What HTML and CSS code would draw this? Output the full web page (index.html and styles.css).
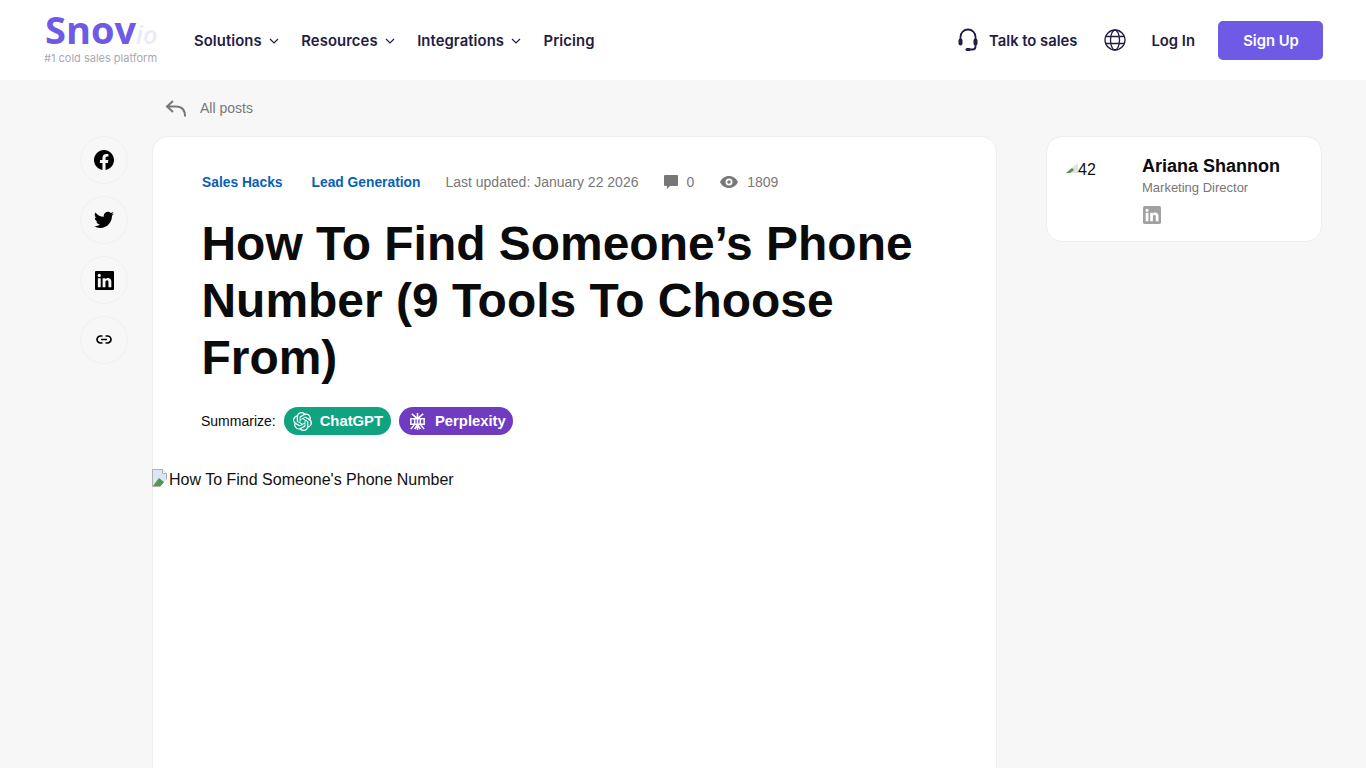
FILE: index.html
```html
<!DOCTYPE html>
<html lang="en">
<head>
    <meta charset="UTF-8">
    <meta name="viewport" content="width=device-width, initial-scale=1.0">
    <title>How To Find Someone's Phone Number (9 Tools To Choose From)</title>
    <link rel="stylesheet" href="styles.css">
</head>
<body>

    <header>
        <a class="logo" href="#">
            <span class="logo-name">Snov<i>io</i></span>
            <span class="logo-tag">#1 cold sales platform</span>
        </a>
        <nav class="main-nav">
            <a href="#">Solutions <svg class="chevron" viewBox="0 0 10 6"><path d="M1 1l4 4 4-4"/></svg></a>
            <a href="#">Resources <svg class="chevron" viewBox="0 0 10 6"><path d="M1 1l4 4 4-4"/></svg></a>
            <a href="#">Integrations <svg class="chevron" viewBox="0 0 10 6"><path d="M1 1l4 4 4-4"/></svg></a>
            <a href="#">Pricing</a>
        </nav>
        <div class="header-right">
            <a class="sales" href="#">
                <svg class="headset" viewBox="0 0 20 24">
                    <path class="line" d="M2.500 13V9a7.500 7.500 0 0 1 15 0v4"/>
                    <rect x="0.500" y="10.500" width="4" height="7" rx="2"/>
                    <rect x="15.500" y="10.500" width="4" height="7" rx="2"/>
                    <path class="line" d="M17.500 17v1.500a3 3 0 0 1-3 3H10"/>
                    <rect x="7.500" y="20" width="5" height="3" rx="1.500"/>
                </svg>
                Talk to sales
            </a>
            <svg class="globe" viewBox="0 0 22 22">
                <circle cx="11" cy="11" r="10"/>
                <ellipse cx="11" cy="11" rx="4.500" ry="10"/>
                <path d="M1.500 7.500h19M1.500 14.500h19"/>
            </svg>
            <a class="login" href="#">Log In</a>
            <a class="signup" href="#">Sign Up</a>
        </div>
    </header>

    <div class="back-row">
        <a href="#">
            <svg class="back-icon" viewBox="0 0 22 20"><path d="M8 2L2 7.500l6 5.500M2 7.500h9c5.500 0 9 3 9 10"/></svg>
            All posts
        </a>
    </div>

    <div class="page">
        <div class="share">
            <a href="#">
                <svg viewBox="0 0 20 20"><path fill-rule="evenodd" d="M20 10.060C20 4.500 15.500 0 10 0S0 4.500 0 10.060c0 5 3.660 9.160 8.440 9.940v-7H5.900v-2.940h2.540V7.850c0-2.520 1.490-3.910 3.780-3.910 1.100 0 2.240.2 2.240.2v2.470h-1.260c-1.240 0-1.630.78-1.630 1.570v1.880h2.780L13.900 13h-2.340v7C16.340 19.220 20 15.060 20 10.060z"/></svg>
            </a>
            <a href="#">
                <svg viewBox="0 0 24 20"><path d="M24 2.400a10 10 0 0 1-2.830.78A4.900 4.900 0 0 0 23.340.48a9.900 9.900 0 0 1-3.130 1.190A4.930 4.930 0 0 0 11.810 6.150 14 14 0 0 1 1.670.91a4.930 4.930 0 0 0 1.520 6.570A4.900 4.900 0 0 1 .96 6.860v.06a4.930 4.930 0 0 0 3.950 4.830 5 5 0 0 1-2.220.08 4.930 4.930 0 0 0 4.600 3.420A9.900 9.900 0 0 1 0 17.290 14 14 0 0 0 7.550 19.500c9.060 0 14-7.500 14-14l-.01-.64A10 10 0 0 0 24 2.400z"/></svg>
            </a>
            <a href="#">
                <svg class="in-icon" viewBox="0 0 20 20"><path fill-rule="evenodd" d="M1 0h18a1 1 0 0 1 1 1v18a1 1 0 0 1-1 1H1a1 1 0 0 1-1-1V1a1 1 0 0 1 1-1zM3 7.500V17h3V7.500zM4.500 3a1.700 1.700 0 1 0 0 3.400 1.700 1.700 0 0 0 0-3.400zM8 7.500V17h3v-5c0-1.400.7-2.200 1.800-2.200S14.200 10.600 14.200 12v5h3v-5.800c0-2.600-1.400-3.900-3.400-3.900-1.300 0-2.300.6-2.800 1.500V7.500z"/></svg>
            </a>
            <a href="#">
                <svg class="link-icon" viewBox="0 0 16 10"><path d="M6.500 1H4.500a3.500 3.500 0 0 0 0 7h2M9.500 1h2a3.500 3.500 0 0 1 0 7h-2M5 4.500h6"/></svg>
            </a>
        </div>

        <article class="post">
            <div class="post-head">
                <div class="meta">
                    <a class="cat" href="#">Sales Hacks</a>
                    <a class="cat" href="#">Lead Generation</a>
                    <span class="updated">Last updated: January 22 2026</span>
                    <span class="stat comments">
                        <svg viewBox="0 0 14 14"><path d="M1 0h12a1 1 0 0 1 1 1v9a1 1 0 0 1-1 1H6l-3 3v-3H1a1 1 0 0 1-1-1V1a1 1 0 0 1 1-1z"/></svg>
                        0
                    </span>
                    <span class="stat">
                        <svg class="eye" viewBox="0 0 18 12"><path fill-rule="evenodd" d="M9 0c4 0 7.300 2.500 9 6-1.700 3.500-5 6-9 6S1.700 9.500 0 6c1.700-3.500 5-6 9-6zm0 2.500a3.500 3.500 0 1 0 0 7 3.500 3.500 0 0 0 0-7zM9 4.200a1.800 1.800 0 1 1 0 3.600 1.800 1.800 0 0 1 0-3.600z"/></svg>
                        1809
                    </span>
                </div>
                <h1>How To Find Someone’s Phone Number (9 Tools To Choose From)</h1>
                <div class="summarize">
                    <span>Summarize:</span>
                    <a class="pill pill-gpt" href="#">
                        <svg class="gpt-icon" viewBox="0 0 24 24"><path d="M22.2819 9.8211a5.9847 5.9847 0 0 0-.5157-4.9108 6.0462 6.0462 0 0 0-6.5098-2.9A6.0651 6.0651 0 0 0 4.9807 4.1818a5.9847 5.9847 0 0 0-3.9977 2.9 6.0462 6.0462 0 0 0 .7427 7.0966 5.98 5.98 0 0 0 .511 4.9107 6.051 6.051 0 0 0 6.5146 2.9001A5.9847 5.9847 0 0 0 13.2599 24a6.0557 6.0557 0 0 0 5.7718-4.2058 5.9894 5.9894 0 0 0 3.9977-2.9001 6.0557 6.0557 0 0 0-.7475-7.0729zm-9.022 12.6081a4.4755 4.4755 0 0 1-2.8764-1.0408l.1419-.0804 4.7783-2.7582a.7948.7948 0 0 0 .3927-.6813v-6.7369l2.02 1.1686a.071.071 0 0 1 .038.052v5.5826a4.504 4.504 0 0 1-4.4945 4.4944zm-9.6607-4.1254a4.4708 4.4708 0 0 1-.5346-3.0137l.142.0852 4.783 2.7582a.7712.7712 0 0 0 .7806 0l5.8428-3.3685v2.3324a.0804.0804 0 0 1-.0332.0615L9.74 19.9502a4.4992 4.4992 0 0 1-6.1408-1.6464zM2.3408 7.8956a4.485 4.485 0 0 1 2.3655-1.9728V11.6a.7664.7664 0 0 0 .3879.6765l5.8144 3.3543-2.0201 1.1685a.0757.0757 0 0 1-.071 0l-4.8303-2.7865A4.504 4.504 0 0 1 2.3408 7.872zm16.5963 3.8558L13.1038 8.364 15.1192 7.2a.0757.0757 0 0 1 .071 0l4.8303 2.7913a4.4944 4.4944 0 0 1-.6765 8.1042v-5.6772a.79.79 0 0 0-.407-.667zm2.0107-3.0231l-.142-.0852-4.7735-2.7818a.7759.7759 0 0 0-.7854 0L9.409 9.2297V6.8974a.0662.0662 0 0 1 .0284-.0615l4.8303-2.7866a4.4992 4.4992 0 0 1 6.6802 4.66zM8.3065 12.863l-2.02-1.1638a.0804.0804 0 0 1-.038-.0567V6.0742a4.4992 4.4992 0 0 1 7.3757-3.4537l-.142.0805L8.704 5.459a.7948.7948 0 0 0-.3927.6813zm1.0976-2.3654l2.602-1.4998 2.6069 1.4998v2.9994l-2.5974 1.4997-2.6067-1.4997Z"/></svg>
                        ChatGPT
                    </a>
                    <a class="pill pill-perp" href="#">
                        <svg class="perp-icon" viewBox="0 0 20 20">
                            <path d="M10 1v18M4 2l6 5 6-5M3 7h14v6H3zM7 7v6M13 7v6M3 18l4-5M17 18l-4-5M7 18l3-5 3 5"/>
                        </svg>
                        Perplexity
                    </a>
                </div>
            </div>
            <div class="cover">
                <svg class="broken" viewBox="0 0 16 18">
                    <path d="M.5.5h10l4 4v13H.5z" fill="#dbe6f7" stroke="#b0b0b0"/>
                    <path d="M10.500.5v4h4" fill="#fff" stroke="#b0b0b0"/>
                    <path d="M1 17l6-8 5 4-3 4z" fill="#4f9a4c"/>
                    <path d="M8 18L16 9v9z" fill="#fff"/>
                </svg>
                <span>How To Find Someone's Phone Number</span>
            </div>
        </article>

        <aside class="author">
            <div class="author-photo">
                <svg class="broken-small" viewBox="0 0 12 10">
                    <path d="M12 0L0 9v1h12z" fill="#dfe5da"/>
                    <path d="M0 10l6-5 2 2-4 3z" fill="#4f9a4c"/>
                </svg>
                <span>42</span>
            </div>
            <div class="author-info">
                <div class="author-name">Ariana Shannon</div>
                <div class="author-role">Marketing Director</div>
                <a class="author-link" href="#">
                    <svg viewBox="0 0 20 20"><rect width="20" height="20" rx="2"/><path fill="#fff" d="M3 7.500h3V17H3zM4.500 3a1.700 1.700 0 1 1 0 3.400 1.700 1.700 0 0 1 0-3.400zM8 7.500h3v1.300c.5-.9 1.500-1.500 2.800-1.500 2 0 3.400 1.300 3.400 3.900V17h-3v-5c0-1.400-.3-2.200-1.400-2.200S11 10.600 11 12v5H8z"/></svg>
                </a>
            </div>
        </aside>
    </div>

</body>
</html>
```

FILE: styles.css
```css
html, body {
    height: 768px;
    overflow: hidden;
}
body {
    margin: 0;
    padding: 0;
    background-color: #f7f7f7;
    color: #0b0b0b;
    font-family: "Liberation Sans", Arial, sans-serif;
}
a {
    text-decoration: none;
    color: inherit;
}
svg {
    display: block;
    flex-shrink: 0;
}

header {
    height: 80px;
    box-sizing: border-box;
    padding: 0 43px 0 44px;
    background-color: #fff;
    display: flex;
    align-items: center;
    font-family: Inter, sans-serif;
    font-size: 14.800px;
    font-weight: 600;
    color: #231c45;
}
.logo {
    width: 150px;
    margin-top: -3px;
    display: flex;
    flex-direction: column;
}
.logo-name {
    margin-left: 1px;
    font-family: "Open Sans", sans-serif;
    font-size: 38px;
    font-weight: 700;
    line-height: 32px;
    color: #6f5ae6;
}
.logo-name i {
    font-size: 25px;
    font-weight: 600;
    color: #ebe9fb;
}
.logo-tag {
    margin-top: 1px;
    font-size: 11px;
    font-weight: 400;
    line-height: 14px;
    color: #a9a7b4;
    white-space: nowrap;
}
.main-nav {
    display: flex;
    align-items: center;
    gap: 22.500px;
    margin-top: 2px;
    letter-spacing: 0.100px;
}
.main-nav a {
    display: flex;
    align-items: center;
    gap: 6px;
}
.chevron {
    width: 10px;
    height: 6px;
    margin-left: 1px;
}
.chevron path {
    fill: none;
    stroke: #231c45;
    stroke-width: 1.200;
}
.header-right {
    margin-left: auto;
    display: flex;
    align-items: center;
}
.sales {
    display: flex;
    align-items: center;
    gap: 11px;
    padding-top: 1px;
}
.headset {
    width: 20px;
    height: 24px;
    margin-top: -1px;
}
.headset rect {
    fill: #231c45;
}
.headset .line {
    fill: none;
    stroke: #231c45;
    stroke-width: 1.800;
}
.globe {
    width: 22px;
    height: 22px;
    margin-left: 27px;
    fill: none;
    stroke: #231c45;
    stroke-width: 1.300;
}
.login {
    margin-left: 25px;
    padding-top: 1px;
}
.signup {
    margin-left: 23px;
    width: 105px;
    height: 39px;
    box-sizing: border-box;
    padding: 1px 0 0 1px;
    border-radius: 5px;
    background-color: #6f5ae6;
    color: #fff;
    font-weight: 600;
    display: flex;
    align-items: center;
    justify-content: center;
}

.back-row {
    height: 56px;
    padding-left: 165px;
    display: flex;
    align-items: center;
    font-size: 14px;
    color: #777;
}
.back-row a {
    display: flex;
    align-items: center;
    gap: 13px;
}
.back-icon {
    width: 22px;
    height: 20px;
    margin-top: 2px;
    fill: none;
    stroke: #777;
    stroke-width: 2;
}

.page {
    display: flex;
    align-items: flex-start;
    padding: 0 43px 0 80px;
}
.share {
    width: 48px;
    display: flex;
    flex-direction: column;
    gap: 12px;
    flex-shrink: 0;
}
.share a {
    width: 48px;
    height: 48px;
    box-sizing: border-box;
    border: 1px solid #f0f0f0;
    border-radius: 50%;
    display: flex;
    align-items: center;
    justify-content: center;
}
.share svg {
    width: 20px;
    height: 20px;
    fill: #000;
}
.share .in-icon {
    width: 19px;
    height: 19px;
}
.share .link-icon {
    width: 16px;
    height: 10px;
    fill: none;
    stroke: #000;
    stroke-width: 1.700;
}

.post {
    width: 845px;
    height: 900px;
    margin-left: 24px;
    box-sizing: border-box;
    flex-shrink: 0;
    background-color: #fff;
    border: 1px solid #eee;
    border-radius: 16px;
}
.post-head {
    padding: 36px 49px 0;
}
.meta {
    display: flex;
    align-items: center;
    height: 18px;
    font-size: 14px;
    color: #777;
}
.cat {
    margin-right: 29px;
    font-size: 13.800px;
    font-weight: 700;
    color: #0a5fb4;
}
.cat + .cat {
    margin-right: 25px;
}
.stat {
    display: flex;
    align-items: center;
    gap: 9px;
    margin-left: 26px;
}
.comments {
    gap: 8px;
}
.stat svg {
    width: 14px;
    height: 14px;
    fill: #777;
}
.stat .eye {
    width: 18px;
    height: 12px;
}
h1 {
    margin: 24px 0 0 -0.500px;
    font-size: 47.950px;
    font-weight: 700;
    line-height: 57px;
    color: #0b0b0b;
}
.summarize {
    display: flex;
    align-items: center;
    gap: 8px;
    margin-top: 21px;
    margin-left: -1px;
    font-size: 14px;
}
.pill {
    height: 28px;
    padding: 0 7px 0 9px;
    border-radius: 14px;
    display: flex;
    align-items: center;
    gap: 8px;
    color: #fff;
    font-size: 14.800px;
    font-weight: 700;
}
.pill svg {
    width: 19px;
    height: 19px;
}
.gpt-icon {
    fill: #fff;
}
.perp-icon {
    fill: none;
    stroke: #fff;
    stroke-width: 1.600;
}
.pill-gpt {
    background-color: #10a37f;
    padding-right: 8px;
}
.pill-perp {
    background-color: #6f3bc1;
}
.cover {
    margin-top: 33px;
    font-size: 16px;
    line-height: 24px;
    color: #111;
    display: flex;
    align-items: center;
    margin-left: -1px;
}
.broken {
    width: 16px;
    height: 18px;
    margin: -4px 1px 0 0;
}

.author {
    width: 276px;
    height: 106px;
    margin-left: 49px;
    box-sizing: border-box;
    flex-shrink: 0;
    background-color: #fff;
    border: 1px solid #eee;
    border-radius: 16px;
    display: flex;
    padding: 19px 19px 0;
}
.author-photo {
    width: 76px;
    display: flex;
    align-items: flex-start;
    font-size: 16px;
    line-height: 26px;
    color: #111;
    flex-shrink: 0;
}
.broken-small {
    width: 12px;
    height: 10px;
    margin-top: 7px;
}
.author-photo span {
    margin-top: 1px;
}
.author-name {
    font-size: 18px;
    font-weight: 700;
    line-height: 21px;
}
.author-role {
    margin-top: 3px;
    font-size: 13px;
    line-height: 16px;
    color: #777;
}
.author-link {
    display: block;
    margin: 10px 0 0 1px;
}
.author-link svg {
    width: 18px;
    height: 18px;
    fill: #a1a1a1;
}
```
